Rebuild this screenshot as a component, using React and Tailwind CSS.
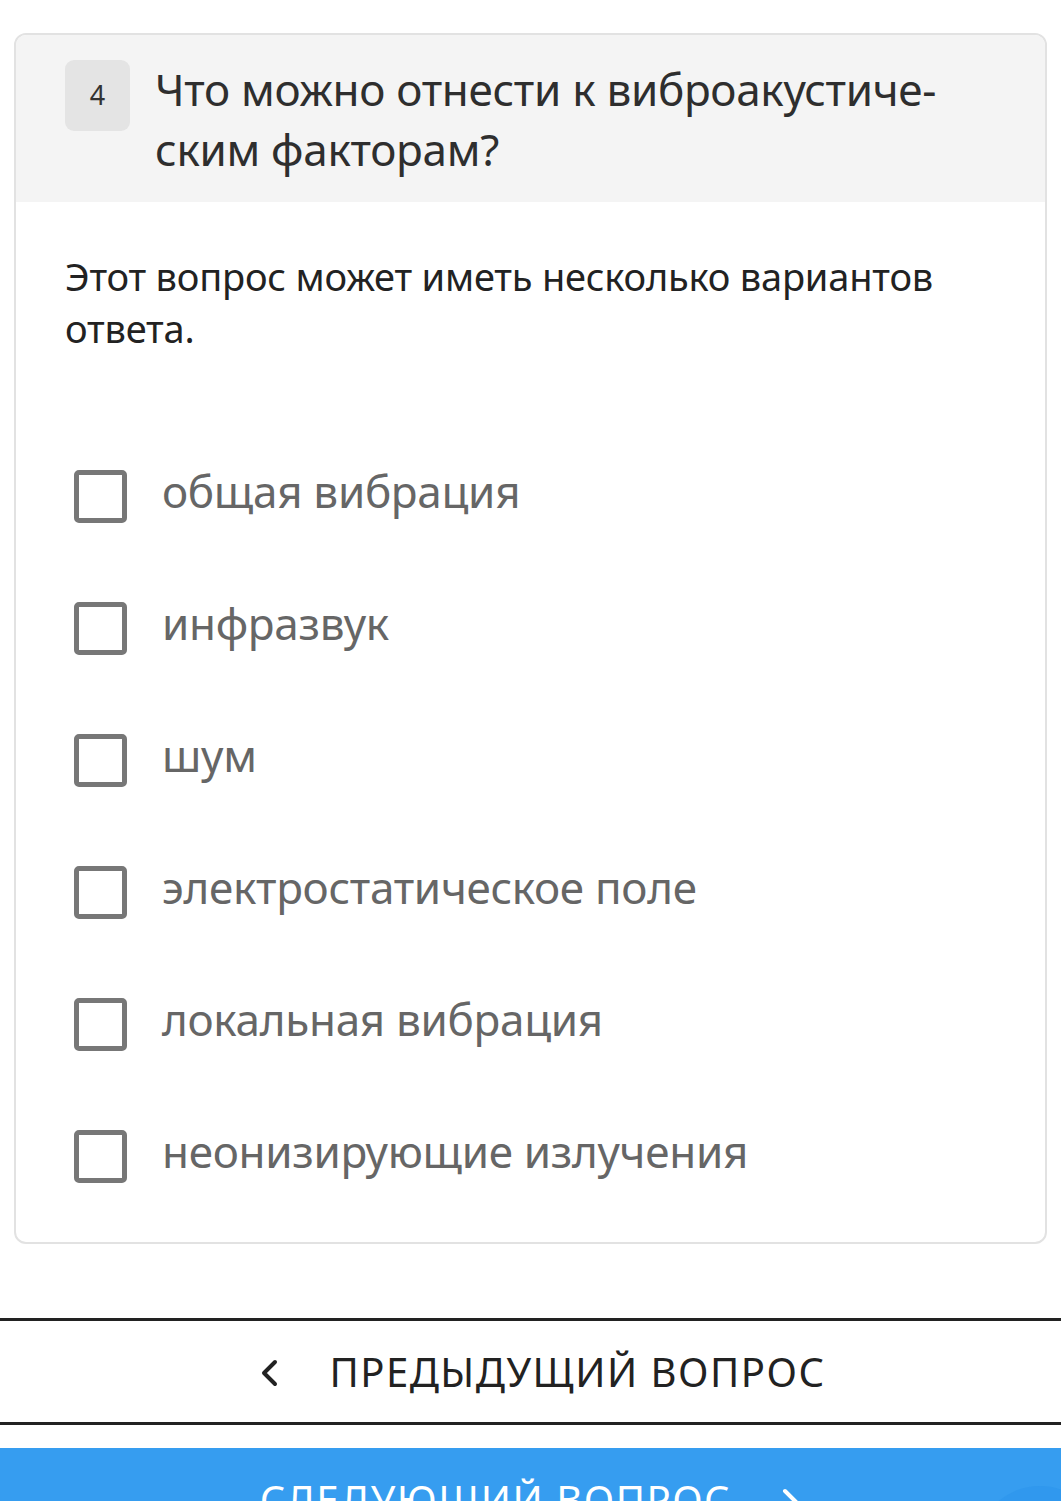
import React from "react";

const options = [
  "общая вибрация",
  "инфразвук",
  "шум",
  "электростатическое поле",
  "локальная вибрация",
  "неонизирующие излучения",
];

export default function App() {
  return (
    <div className="w-[1061px] h-[1501px] overflow-hidden bg-white" style={{ fontFamily: '"Noto Sans", "Open Sans", sans-serif' }}>
      <div className="pt-[33px] px-[14px]">
        <div className="border-2 border-[#e2e2e2] rounded-[12px] overflow-hidden">
          <div className="bg-[#f4f4f4] flex items-start pl-[49px] pr-[20px] pt-[24px] pb-[23px] gap-[25px]">
            <div className="w-[65px] h-[71px] shrink-0 rounded-[9px] bg-[#e4e4e4] flex items-center justify-center text-[27px] text-[#333] mt-[1px]">
              4
            </div>
            <div className="text-[44px] leading-[60px] text-[#2e2e2e] tracking-[-0.3px]">
              Что можно отнести к виброакустиче-<br />ским факторам?
            </div>
          </div>
          <div className="px-[49px] pt-[48px] pb-[30px]">
            <div className="text-[38px] leading-[52px] text-[#222] tracking-[-0.2px] pr-[40px]">
              Этот вопрос может иметь несколько вариантов ответа.
            </div>
            <div className="mt-[116px] flex flex-col gap-[80px] pl-[9px] pb-[30px]">
              {options.map((o) => (
                <div key={o} className="flex items-center h-[52px] gap-[35px]">
                  <div className="w-[53px] h-[53px] shrink-0 border-[5px] border-[#777] rounded-[5px]" />
                  <div className="text-[44px] text-[#666] leading-[52px] tracking-[-0.3px] -mt-[10px]">{o}</div>
                </div>
              ))}
            </div>
          </div>
        </div>
      </div>
      <div className="mt-[74px] border-y-[3px] border-[#222] h-[107px] flex items-center justify-center gap-[50px] pl-[24px]">
        <svg width="20" height="28" viewBox="0 0 20 28" className="mt-[2px]">
          <path d="M16 3 L5 14 L16 25" fill="none" stroke="#222" strokeWidth="4" strokeLinecap="round" strokeLinejoin="round" />
        </svg>
        <span className="text-[40px] tracking-[1.5px] text-[#222]">ПРЕДЫДУЩИЙ ВОПРОС</span>
      </div>
      <div className="mt-[23px] relative h-[110px] bg-[#369df0] flex items-start justify-center gap-[50px] pt-[22px] overflow-hidden">
        <span className="text-[40px] leading-[60px] tracking-[1.5px] text-white">СЛЕДУЮЩИЙ ВОПРОС</span>
        <svg width="20" height="28" viewBox="0 0 20 28" className="mt-[18px]">
          <path d="M4 3 L15 14 L4 25" fill="none" stroke="#fff" strokeWidth="4" strokeLinecap="round" strokeLinejoin="round" />
        </svg>
        <div className="absolute left-[975px] top-[38px] w-[130px] h-[130px] rounded-full bg-[#2a93ec] opacity-50" />
      </div>
    </div>
  );
}
